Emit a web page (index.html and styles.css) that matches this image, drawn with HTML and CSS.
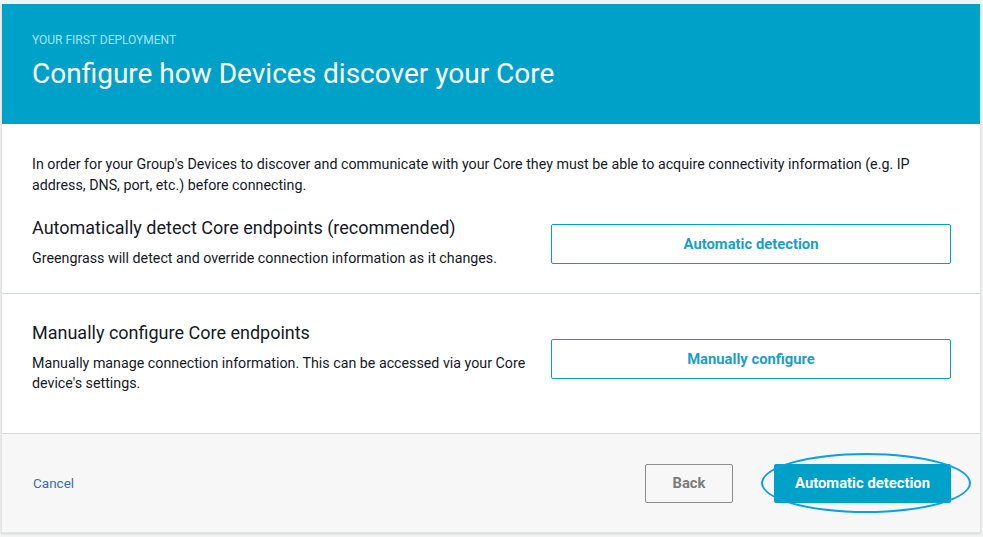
FILE: index.html
```html
<!DOCTYPE html>
<html>
<head>
<meta charset="utf-8">
<link rel="stylesheet" href="styles.css">
</head>
<body>
<div class="card">
  <header class="hero">
    <div class="eyebrow">YOUR FIRST DEPLOYMENT</div>
    <h1 class="title">Configure how Devices discover your Core</h1>
  </header>
  <section class="intro">
    <p class="lead">In order for your Group's Devices to discover and communicate with your Core they must be able to acquire connectivity information (e.g. IP address, DNS, port, etc.) before connecting.</p>
    <div class="option option-first">
      <div class="option-text">
        <h2 class="option-title">Automatically detect Core endpoints (recommended)</h2>
        <p class="option-desc">Greengrass will detect and override connection information as it changes.</p>
      </div>
      <button class="btn-outline">Automatic detection</button>
    </div>
  </section>
  <section class="manual">
    <div class="option">
      <div class="option-text">
        <h2 class="option-title">Manually configure Core endpoints</h2>
        <p class="option-desc">Manually manage connection information. This can be accessed via your Core device's settings.</p>
      </div>
      <button class="btn-outline">Manually configure</button>
    </div>
  </section>
  <footer class="footer">
    <a class="cancel" href="#">Cancel</a>
    <div class="actions">
      <button class="btn-back">Back</button>
      <div class="primary-wrap">
        <button class="btn-primary">Automatic detection</button>
        <span class="ring"></span>
      </div>
    </div>
  </footer>
</div>
</body>
</html>
```

FILE: styles.css
```css
* { box-sizing: border-box; }
html, body { margin: 0; padding: 0; }
body {
  background: #f2f3f3;
  font-family: Roboto, "Liberation Sans", sans-serif;
  color: #16191f;
  width: 983px;
  height: 537px;
  overflow: hidden;
}
.card {
  margin: 4px 2px 0 1px;
  background: #fff;
  border: 1px solid #e4e4e4;
  border-top: none;
  box-shadow: 0 1px 2px rgba(0,0,0,0.12);
}
.hero {
  background: #00a1c9;
  height: 120px;
  padding: 29px 30px 0;
}
.eyebrow {
  font-size: 12px;
  color: #a6e6f7;
  line-height: 14px;
}
.title {
  margin: 10px 0 0;
  font-weight: 400;
  font-size: 28px;
  line-height: 34px;
  color: #fff;
}
.intro {
  padding: 30px 29px 25px 30px;
  border-bottom: 1px solid #d5dbdb;
}
.lead {
  margin: 0;
  font-size: 14.25px;
  line-height: 21px;
  color: #16191f;
}
.option {
  display: flex;
  align-items: center;
  justify-content: space-between;
}
.option-first { margin-top: 20px; }
.option-text { width: 495px; }
.option-title {
  margin: 0;
  font-weight: 400;
  font-size: 18px;
  line-height: 24px;
}
.option-desc {
  margin: 8px 0 0;
  font-size: 14.25px;
  line-height: 20px;
}
.btn-outline {
  width: 400px;
  height: 40px;
  margin-top: 4px;
  background: #fff;
  border: 1px solid #00a1c9;
  border-radius: 2px;
  color: #1a9fc6;
  font-family: inherit;
  font-weight: 700;
  font-size: 14.8px;
}
.manual {
  padding: 27px 29px 40px 30px;
  border-bottom: 1px solid #d5dbdb;
}
.footer {
  background: #f7f7f7;
  height: 98px;
  padding: 0 29px 0 31px;
  display: flex;
  align-items: center;
  justify-content: space-between;
}
.cancel {
  color: #3b6db3;
  font-size: 13.5px;
  text-decoration: none;
}
.actions {
  display: flex;
  align-items: center;
  gap: 41px;
}
.btn-back {
  width: 88px;
  height: 39px;
  background: #f7f7f7;
  border: 1px solid #8c8c8c;
  border-radius: 2px;
  color: #7b7b7b;
  font-family: inherit;
  font-weight: 700;
  font-size: 14.8px;
}
.primary-wrap { position: relative; }
.btn-primary {
  width: 177px;
  height: 39px;
  background: #00a1c9;
  border: none;
  border-radius: 2px;
  color: #fff;
  font-family: inherit;
  font-weight: 700;
  font-size: 14.8px;
}
.ring {
  position: absolute;
  left: -13px;
  top: -11px;
  width: 210px;
  height: 60px;
  border: 2px solid #0aa0e2;
  border-radius: 50%;
  pointer-events: none;
}
```
